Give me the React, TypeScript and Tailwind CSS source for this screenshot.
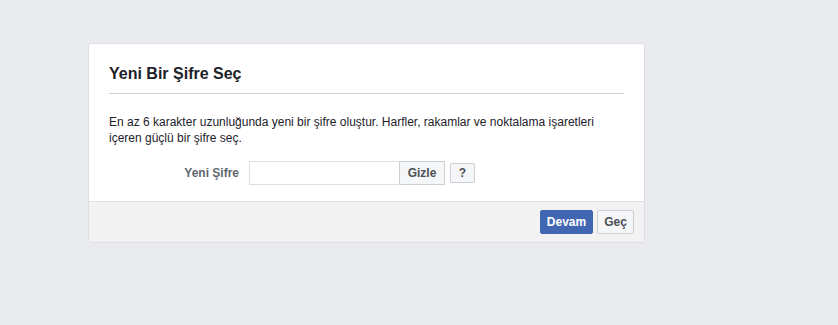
import React from 'react';

const App = () => {
  return (
    <div className="w-full h-[325px] bg-[#e9ebee] pt-[43px] pl-[88px] font-['Liberation_Sans',Arial,sans-serif] text-[#1d2129]">
      <div className="w-[557px] bg-white border border-[#dddfe2] rounded-[3px] overflow-hidden">
        <div className="mx-5 pt-[20px] pb-[9px] border-b border-[#ccd0d5]">
          <h2 className="text-[16px] leading-[20px] font-bold">Yeni Bir Şifre Seç</h2>
        </div>

        <div className="px-5 pt-[20px] pb-[16px]">
          <div className="text-[12px] leading-[16px]">
            En az 6 karakter uzunluğunda yeni bir şifre oluştur. Harfler, rakamlar ve noktalama işaretleri içeren güçlü bir şifre seç.
          </div>
          <div className="flex items-center mt-[15px]">
            <label className="w-[140px] pr-[10px] text-right text-[12px] font-bold text-[#606770]">Yeni Şifre</label>
            <input
              type="password"
              className="w-[151px] h-[24px] border border-[#dddfe2] px-1 text-[12px] outline-none"
            />
            <button className="-ml-px h-[24px] w-[46px] border border-[#ccd0d5] bg-[#f5f6f7] text-[12px] font-bold text-[#4b4f56]">
              Gizle
            </button>
            <button className="ml-[5px] h-[20px] w-[25px] border border-[#ccd0d5] rounded-[2px] bg-[#f5f6f7] text-[12px] font-bold text-[#4b4f56]">
              ?
            </button>
          </div>
        </div>

        <div className="bg-[#f2f2f2] border-t border-[#dddfe2] flex justify-end gap-[4px] pt-[8px] pb-[8px] pr-[10px]">
          <button className="h-[24px] w-[53px] rounded-[2px] border border-[#4267b2] bg-[#4267b2] text-white text-[12px] font-bold">
            Devam
          </button>
          <button className="h-[24px] w-[37px] rounded-[2px] border border-[#ccd0d5] bg-[#f5f6f7] text-[#4b4f56] text-[12px] font-bold">
            Geç
          </button>
        </div>
      </div>
    </div>
  );
};

export default App;
